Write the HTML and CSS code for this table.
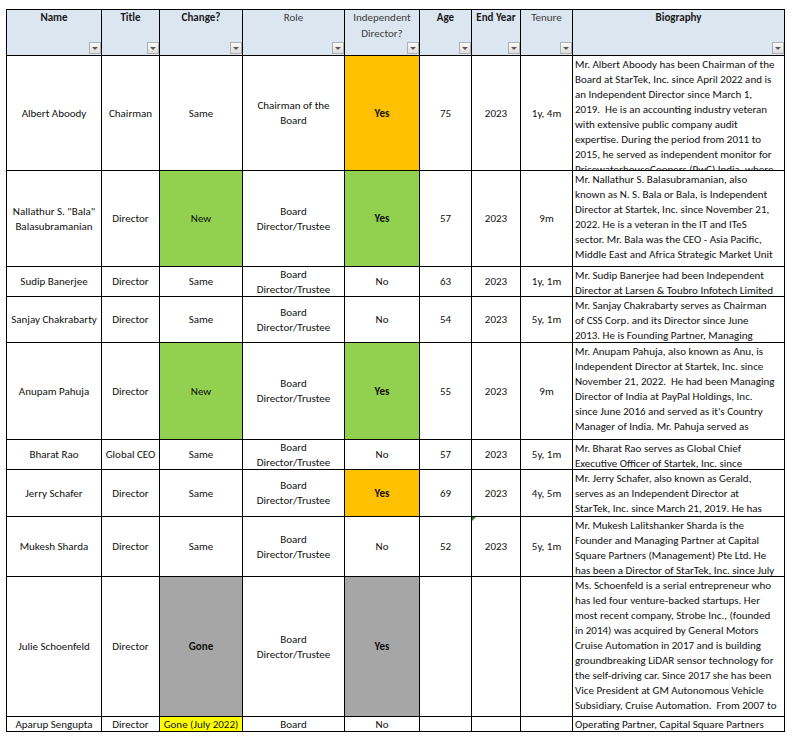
FILE: index.html
```html
<!DOCTYPE html>
<html>
<head>
<meta charset="utf-8">
<link rel="stylesheet" href="styles.css">
</head>
<body>
<div class="sheet">
  <div class="cell hd"><span>Name</span><i class="dd"></i></div>
  <div class="cell hd"><span>Title</span><i class="dd"></i></div>
  <div class="cell hd"><span>Change?</span><i class="dd"></i></div>
  <div class="cell hd lt"><span>Role</span><i class="dd"></i></div>
  <div class="cell hd lt"><span>Independent<br>Director?</span><i class="dd"></i></div>
  <div class="cell hd"><span>Age</span><i class="dd"></i></div>
  <div class="cell hd"><span>End Year</span><i class="dd"></i></div>
  <div class="cell hd lt"><span>Tenure</span><i class="dd"></i></div>
  <div class="cell hd"><span>Biography</span><i class="dd"></i></div>

  <div class="cell">Albert Aboody</div>
  <div class="cell">Chairman</div>
  <div class="cell">Same</div>
  <div class="cell">Chairman of the<br>Board</div>
  <div class="cell or b">Yes</div>
  <div class="cell">75</div>
  <div class="cell">2023</div>
  <div class="cell">1y, 4m</div>
  <div class="cell bio"><span>Mr. Albert Aboody has been Chairman of the</span><span>Board at StarTek, Inc. since April 2022 and is</span><span>an Independent Director since March 1,</span><span>2019.&nbsp; He is an accounting industry veteran</span><span>with extensive public company audit</span><span>expertise. During the period from 2011 to</span><span>2015, he served as independent monitor for</span><span>PricewaterhouseCoopers (PwC) India, where</span></div>

  <div class="cell">Nallathur S. "Bala"<br>Balasubramanian</div>
  <div class="cell">Director</div>
  <div class="cell gr">New</div>
  <div class="cell">Board<br>Director/Trustee</div>
  <div class="cell gr b">Yes</div>
  <div class="cell">57</div>
  <div class="cell">2023</div>
  <div class="cell">9m</div>
  <div class="cell bio"><span>Mr. Nallathur S. Balasubramanian, also</span><span>known as N. S. Bala or Bala, is Independent</span><span>Director at Startek, Inc. since November 21,</span><span>2022. He is a veteran in the IT and ITeS</span><span>sector. Mr. Bala was the CEO - Asia Pacific,</span><span>Middle East and Africa Strategic Market Unit</span></div>

  <div class="cell">Sudip Banerjee</div>
  <div class="cell">Director</div>
  <div class="cell">Same</div>
  <div class="cell">Board<br>Director/Trustee</div>
  <div class="cell">No</div>
  <div class="cell">63</div>
  <div class="cell">2023</div>
  <div class="cell">1y, 1m</div>
  <div class="cell bio"><span>Mr. Sudip Banerjee had been Independent</span><span>Director at Larsen &amp; Toubro Infotech Limited</span></div>

  <div class="cell">Sanjay Chakrabarty</div>
  <div class="cell">Director</div>
  <div class="cell">Same</div>
  <div class="cell">Board<br>Director/Trustee</div>
  <div class="cell">No</div>
  <div class="cell">54</div>
  <div class="cell">2023</div>
  <div class="cell">5y, 1m</div>
  <div class="cell bio"><span>Mr. Sanjay Chakrabarty serves as Chairman</span><span>of CSS Corp. and its Director since June</span><span>2013. He is Founding Partner, Managing</span></div>

  <div class="cell">Anupam Pahuja</div>
  <div class="cell">Director</div>
  <div class="cell gr">New</div>
  <div class="cell">Board<br>Director/Trustee</div>
  <div class="cell gr b">Yes</div>
  <div class="cell">55</div>
  <div class="cell">2023</div>
  <div class="cell">9m</div>
  <div class="cell bio"><span>Mr. Anupam Pahuja, also known as Anu, is</span><span>Independent Director at Startek, Inc. since</span><span>November 21, 2022.&nbsp; He had been Managing</span><span>Director of India at PayPal Holdings, Inc.</span><span>since June 2016 and served as it's Country</span><span>Manager of India. Mr. Pahuja served as</span></div>

  <div class="cell">Bharat Rao</div>
  <div class="cell">Global CEO</div>
  <div class="cell">Same</div>
  <div class="cell">Board<br>Director/Trustee</div>
  <div class="cell">No</div>
  <div class="cell">57</div>
  <div class="cell">2023</div>
  <div class="cell">5y, 1m</div>
  <div class="cell bio"><span>Mr. Bharat Rao serves as Global Chief</span><span>Executive Officer of Startek, Inc. since</span></div>

  <div class="cell">Jerry Schafer</div>
  <div class="cell">Director</div>
  <div class="cell">Same</div>
  <div class="cell">Board<br>Director/Trustee</div>
  <div class="cell or b">Yes</div>
  <div class="cell">69</div>
  <div class="cell">2023</div>
  <div class="cell">4y, 5m</div>
  <div class="cell bio"><span>Mr. Jerry Schafer, also known as Gerald,</span><span>serves as an Independent Director at</span><span>StarTek, Inc. since March 21, 2019. He has</span></div>

  <div class="cell">Mukesh Sharda</div>
  <div class="cell">Director</div>
  <div class="cell">Same</div>
  <div class="cell">Board<br>Director/Trustee</div>
  <div class="cell">No</div>
  <div class="cell">52</div>
  <div class="cell flag">2023</div>
  <div class="cell">5y, 1m</div>
  <div class="cell bio"><span>Mr. Mukesh Lalitshanker Sharda is the</span><span>Founder and Managing Partner at Capital</span><span>Square Partners (Management) Pte Ltd. He</span><span>has been a Director of StarTek, Inc. since July</span></div>

  <div class="cell">Julie Schoenfeld</div>
  <div class="cell">Director</div>
  <div class="cell gy b">Gone</div>
  <div class="cell">Board<br>Director/Trustee</div>
  <div class="cell gy b">Yes</div>
  <div class="cell"></div>
  <div class="cell"></div>
  <div class="cell"></div>
  <div class="cell bio"><span>Ms. Schoenfeld is a serial entrepreneur who</span><span>has led four venture-backed startups. Her</span><span>most recent company, Strobe Inc., (founded</span><span>in 2014) was acquired by General Motors</span><span>Cruise Automation in 2017 and is building</span><span>groundbreaking LiDAR sensor technology for</span><span>the self-driving car. Since 2017 she has been</span><span>Vice President at GM Autonomous Vehicle</span><span>Subsidiary, Cruise Automation.&nbsp; From 2007 to</span></div>

  <div class="cell">Aparup Sengupta</div>
  <div class="cell">Director</div>
  <div class="cell yl">Gone (July 2022)</div>
  <div class="cell">Board</div>
  <div class="cell">No</div>
  <div class="cell"></div>
  <div class="cell"></div>
  <div class="cell"></div>
  <div class="cell bio last"><span>Operating Partner, Capital Square Partners</span></div>
</div>
</body>
</html>
```

FILE: styles.css
```css
body {
  margin: 0;
  padding: 9px 0 0 6px;
  background: #fff;
  font-family: Carlito, "Liberation Sans", Arial, sans-serif;
  font-size: 11px;
  color: #111;
}

.sheet {
  display: grid;
  grid-template-columns: 94px 57px 82px 101px 74px 51px 48px 51px 211px;
  grid-template-rows: 45px 114px 95px 29px 45px 96px 29px 46px 59px 139px 14px;
  gap: 1px;
  padding: 1px;
  background: #000;
  width: max-content;
}

.cell {
  background: #fff;
  display: flex;
  align-items: center;
  justify-content: center;
  text-align: center;
  line-height: 15px;
  overflow: hidden;
  position: relative;
  white-space: nowrap;
}

.hd {
  background: #dce6f1;
  flex-direction: column;
  justify-content: flex-start;
  font-weight: bold;
  line-height: 16px;
  color: #1a1a1a;
}

.hd.lt {
  font-weight: normal;
  color: #3c3c3c;
}

.dd {
  margin-top: auto;
  margin-bottom: 1px;
  align-self: flex-end;
  width: 10px;
  height: 10px;
  border: 1px solid #b0b0b0;
  background: linear-gradient(#fbfbfb, #dcdcdc);
  display: flex;
  align-items: center;
  justify-content: center;
}

.dd::after {
  content: "";
  border-left: 3px solid transparent;
  border-right: 3px solid transparent;
  border-top: 3px solid #5a5a5a;
}

.bio {
  display: block;
  text-align: left;
  padding: 1px 0 0 2px;
}

.bio span {
  display: block;
}

.bio.last {
  padding-top: 0;
}

.b { font-weight: bold; }
.or { background: #ffc000; }
.gr { background: #92d050; }
.gy { background: #a6a6a6; }
.yl { background: #ffff00; }

.flag::before {
  content: "";
  position: absolute;
  left: 0;
  top: 0;
  border-top: 4px solid #1e8a1e;
  border-right: 4px solid transparent;
}
```
